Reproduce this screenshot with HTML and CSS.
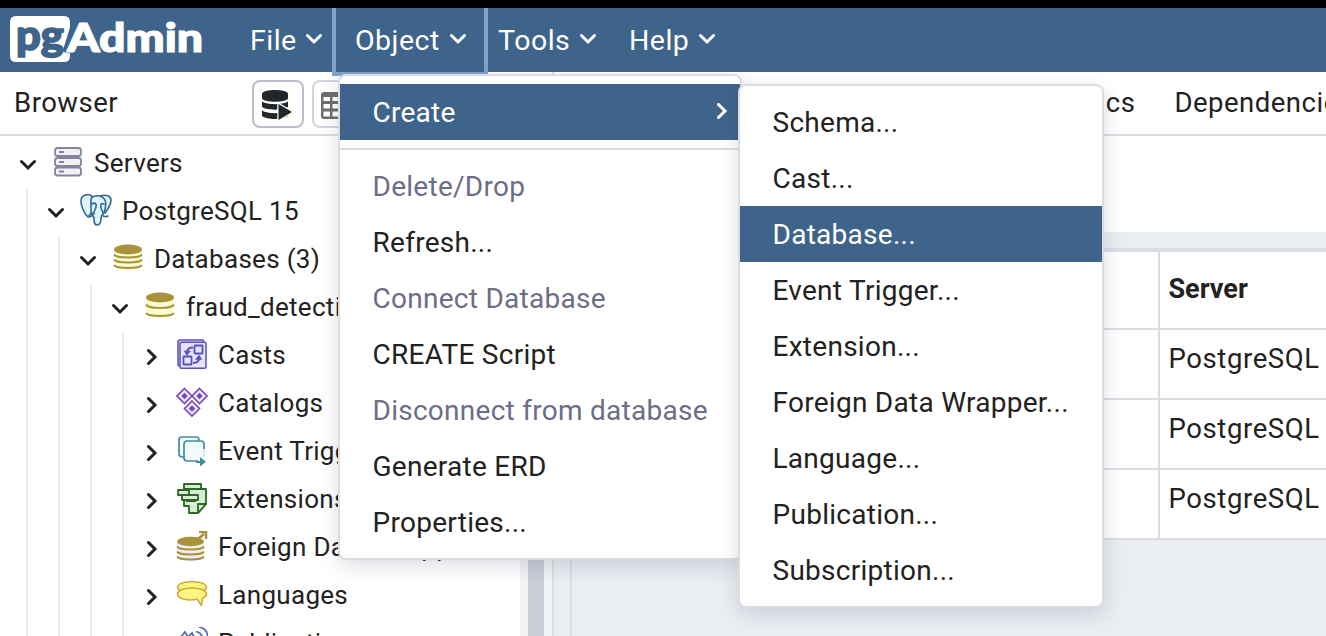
FILE: index.html
```html
<!DOCTYPE html>
<html lang="en">
<head>
<meta charset="utf-8">
<title>pgAdmin</title>
<link rel="stylesheet" href="styles.css">
</head>
<body>
<svg width="0" height="0" class="defs">
  <symbol id="down" viewBox="0 0 16 16"><path d="M1.5 4.500 8 11l6.500-6.500" fill="none" stroke="currentColor" stroke-width="3" stroke-linecap="round"/></symbol>
  <symbol id="right" viewBox="0 0 16 16"><path d="M4.500 1.500 11 8l-6.500 6.500" fill="none" stroke="currentColor" stroke-width="3" stroke-linecap="round"/></symbol>
</svg>
<div class="app">
  <div class="strip"></div>
  <header class="nav">
    <svg class="logo" width="196" height="64" viewBox="0 0 196 64">
      <path d="M6 8H54Q60 8 60 14V48Q60 54 54 54H6Q0 54 0 48V14Q0 8 6 8Z" fill="#fff"/>
      <path d="M61 16 53 42Q54 46 61 45Z" fill="#40648b"/>
      <text class="logo-pg" x="6" y="42" textLength="48" lengthAdjust="spacingAndGlyphs">pg</text>
      <text class="logo-admin" x="57" y="43.500" textLength="136" lengthAdjust="spacingAndGlyphs">Admin</text>
    </svg>
    <nav class="menubar">
      <div class="top file"><span>File</span><svg class="chev"><use href="#down"/></svg></div>
      <div class="top object"><span>Object</span><svg class="chev"><use href="#down"/></svg></div>
      <div class="top tools"><span>Tools</span><svg class="chev"><use href="#down"/></svg></div>
      <div class="top help"><span>Help</span><svg class="chev"><use href="#down"/></svg></div>
    </nav>
  </header>
  <main class="body">
    <aside class="browser">
      <div class="browser-head">
        <span class="browser-title">Browser</span>
        <div class="tool"><svg width="32" height="32" viewBox="0 0 32 32" fill="#222628"><path d="M1 5C1-.3 27-.3 27 5v4c0 5-26 5-26 0z"/><path d="M1 12.500c5 3.500 21 3.500 26 0V18c-5 3.500-21 3.500-26 0zM1 21.500c5 3.500 21 3.500 26 0V27c-5 4-21 4-26 0z"/><path d="M17.500 15v16L31 23z" stroke="#fff" stroke-width="2.500" paint-order="stroke"/></svg></div>
        <div class="tool dim"><svg width="32" height="32" viewBox="0 0 32 32"><path d="M5 3h24q3 0 3 3v21q0 3-3 3H5q-3 0-3-3V6q0-3 3-3zM4.500 8v4H11V8zm9 0v4H20V8zm-9 7v4.500H11V15zm9 0v4.500H20V15zm-9 7.500v5H11v-5zm9 0v5H20v-5z" fill="#222" fill-rule="evenodd"/></svg></div>
      </div>
      <ul class="tree">
        <li><div class="row"><svg class="chev"><use href="#down"/></svg><svg class="icon" viewBox="0 0 32 32"><g fill="#f1f1f4" stroke="#86839f" stroke-width="1.800"><rect x="3" y="1" width="26" height="8" rx="2.500"/><rect x="3" y="11" width="26" height="8" rx="2.500"/><rect x="3" y="20.500" width="26" height="8" rx="2.500"/><path d="M7 5h5M7 15h5M7 24.500h5"/></g></svg><span>Servers</span></div>
        <ul>
          <li><div class="row"><svg class="chev"><use href="#down"/></svg><svg class="icon elephant" viewBox="0 0 32 32"><g fill="#e1f3fb" stroke="#336791" stroke-width="1.600" stroke-linejoin="round" stroke-linecap="round"><path d="M12 2C7-.5 1 1 1 7c0 5 3 12 6 15 2 1 4-3 4-3l1-2z"/><path d="M20 2c6-2 11 0 11 4 0 5-3 9-6 13l-5-1z"/><path d="M11 5c2-4 11-5 14 1 2 4 0 7 0 10-1 5-3 3-4 8 0 5-1 7-4 7s-3-3-3-7c-1-4-4-3-3-8z"/><path d="M12 10c3-2 5 0 4 3-1 4-3 5-2 7M24 10c-3-1-4 0-3 3 0 3 2 4 2 6M13 19c-1 4-3 4-5 4M22 21c2 2 4 2 6 1" fill="none"/></g></svg><span>PostgreSQL 15</span></div>
          <ul>
            <li><div class="row"><svg class="chev"><use href="#down"/></svg><svg class="icon" viewBox="0 0 32 32"><path d="M2 7v16c0 5 28 5 28 0V7z" fill="#fbfbd0"/><g fill="none" stroke="#a8913d" stroke-width="1.900"><path d="M2 11.500c2 4 26 4 28 0M2 16.500c2 4 26 4 28 0M2 22c2 4 26 4 28 0"/></g><ellipse cx="16" cy="6.500" rx="14" ry="5" fill="#a8913d"/></svg><span>Databases (3)</span></div>
            <ul>
              <li><div class="row"><svg class="chev"><use href="#down"/></svg><svg class="icon" viewBox="0 0 32 32"><path d="M2 7v16c0 5 28 5 28 0V7z" fill="#fbfbd0"/><g fill="none" stroke="#a8913d" stroke-width="1.900"><path d="M2 13.500c2 4.500 26 4.500 28 0M2 22c2 4 26 4 28 0"/></g><ellipse cx="16" cy="6.500" rx="14" ry="5" fill="#a8913d"/></svg><span>fraud_detection</span></div>
              <ul>
                <li class="row"><svg class="chev"><use href="#right"/></svg><svg class="icon" viewBox="0 0 32 32"><g fill="#e6e3fa" stroke="#5b50b8" stroke-width="1.500"><path d="M4 27H3q-1 0-1-1V3q0-2 2-2h23l1 2"/><rect x="4" y="3.200" width="26" height="26" rx="1.500"/><rect x="18.500" y="6.500" width="8" height="8" rx=".5" stroke-width="1.800"/><rect x="7.500" y="17.500" width="8" height="8" rx=".5" stroke-width="1.800"/><path d="M17 8.500q-6 0-6 5M17 24q6 0 6-5" fill="none" stroke-width="1.800"/><path d="m9 12.500 2 3 2.500-3zM20.500 20l2.500-3 2 3z" fill="#5b50b8"/></g></svg><span>Casts</span></li>
                <li class="row"><svg class="chev"><use href="#right"/></svg><svg class="icon" viewBox="0 0 32 32"><g fill="#eee5fa" stroke="#7749b8" stroke-width="1.600"><path d="m8.500 1.500 7.500 7.500-7.500 7.500L1 9zM23.500 1.500 31 9l-7.500 7.500L16 9zM16 14l7.500 7.500L16 29l-7.500-7.500z"/></g><path d="m8.500 5.800 3.200 3.200-3.200 3.200L5.300 9zM23.500 5.800 26.700 9l-3.200 3.200L20.300 9zM16 18.300l3.200 3.200-3.200 3.200-3.200-3.200z" fill="#7749b8"/></svg><span>Catalogs</span></li>
                <li class="row"><svg class="chev"><use href="#right"/></svg><svg class="icon" viewBox="0 0 32 32"><g fill="#effdfd" stroke="#458b9d" stroke-width="1.700"><path d="M8 22H6q-3 0-3-3V5q0-3 3-3h14q3 0 3 3v2"/><path d="M22 26H11q-3 0-3-3V9q0-3 3-3h14q3 0 3 3v5"/><path d="M28 14v8" stroke="#c9e9e9"/></g><path d="M20 26h4v-4l6 4.800-6 4.800V28h-4z" fill="#458b9d"/></svg><span>Event Triggers</span></li>
                <li class="row"><svg class="chev"><use href="#right"/></svg><svg class="icon" viewBox="0 0 32 32"><g fill="#d5ecd5" stroke="#2e6625" stroke-width="1.800" stroke-linejoin="round"><path d="M8 1h17v7H8z"/><path d="M8 6h22v15l-8 9H13v-7H8z"/><path d="M2 7h11v5H2zM6 12h16v5H6zM10 18h10M30 21h-8v9z"/></g></svg><span>Extensions</span></li>
                <li class="row"><svg class="chev"><use href="#right"/></svg><svg class="icon" viewBox="0 0 32 32"><path d="M1 11v15c0 5 27 5 27 0V11z" fill="#eee"/><g fill="none" stroke="#a8913d" stroke-width="1.900"><path d="M1 15.500c2 4 25 4 27 0M1 20.500c2 4 25 4 27 0M1 25.500c2 4 25 4 27 0"/></g><ellipse cx="14.500" cy="10.500" rx="13.500" ry="4.700" fill="#a8913d"/><path d="m22 8 6-5M23 1h7v7" fill="none" stroke="#a8913d" stroke-width="2.500"/></svg><span>Foreign Data Wrappers</span></li>
                <li class="row"><svg class="chev"><use href="#right"/></svg><svg class="icon" viewBox="0 0 32 32"><g fill="#fdf582" stroke="#d1a437" stroke-width="1.500" stroke-linejoin="round"><ellipse cx="16" cy="8" rx="14.500" ry="5.500"/><path d="M21 20C11 22.500 1.500 19.500 1.500 15 1.500 7 30.500 7 30.500 15c0 2-2 3.500-4 4.500L25.500 26.500z"/></g></svg><span>Languages</span></li>
                <li class="row"><svg class="chev publication-chev"><use href="#right"/></svg><svg class="icon" viewBox="0 0 32 32"><g fill="none" stroke="#5268b5" stroke-width="1.700"><path d="m3 12 6-7 3 5 4-4 3 6M20 4.500q6 1 7 8M22-.5q10 2 10 12"/></g></svg><span>Publications</span></li>
              </ul></li>
            </ul></li>
          </ul></li>
        </ul></li>
      </ul>
    </aside>
    <div class="splitter"><div class="track"><div class="thumb"></div></div></div>
    <section class="content">
      <div class="tabs"><span>Statistics</span><span>Dependencies</span></div>
      <div class="panel"></div>
      <div class="grid-wrap">
        <div class="grid">
          <div class="cell head"></div><div class="cell head">Server</div>
          <div class="cell"></div><div class="cell">PostgreSQL 15</div>
          <div class="cell"></div><div class="cell">PostgreSQL 15</div>
          <div class="cell"></div><div class="cell">PostgreSQL 15</div>
        </div>
      </div>
    </section>
  </main>
  <div class="menu object-menu">
    <div class="item on"><span>Create</span><svg class="chev"><use href="#right"/></svg></div>
    <div class="divider"></div>
    <div class="item off">Delete/Drop</div>
    <div class="item">Refresh...</div>
    <div class="item off">Connect Database</div>
    <div class="item">CREATE Script</div>
    <div class="item off">Disconnect from database</div>
    <div class="item">Generate ERD</div>
    <div class="item">Properties...</div>
  </div>
  <div class="menu create-menu">
    <div class="item">Schema...</div>
    <div class="item">Cast...</div>
    <div class="item on">Database...</div>
    <div class="item">Event Trigger...</div>
    <div class="item">Extension...</div>
    <div class="item">Foreign Data Wrapper...</div>
    <div class="item">Language...</div>
    <div class="item">Publication...</div>
    <div class="item">Subscription...</div>
  </div>
</div>
</body>
</html>
```
FILE: styles.css
```css
* { box-sizing: border-box; }
body { margin: 0; font-family: Roboto, sans-serif; font-size: 27.5px; color: #222; overflow: hidden; }
.defs { position: absolute; }
.app { position: relative; width: 1326px; height: 636px; overflow: hidden; display: flex; flex-direction: column; background: #fff; }
.strip { height: 8px; flex: none; background: #000; }
.nav { height: 64px; flex: none; display: flex; background: #3f648b; color: #fff; padding-left: 10px; z-index: 1; }
.logo { flex: none; overflow: visible; }
.logo-pg, .logo-admin { font-family: Lato, sans-serif; font-weight: 900; }
.logo-pg { font-size: 42px; fill: #3f648b; stroke: #3f648b; stroke-width: 1.6px; }
.logo-admin { font-size: 39px; fill: #fff; stroke: #fff; stroke-width: 1.2px; }
.menubar { display: flex; align-items: flex-start; font-size: 28.5px; letter-spacing: .5px; }
.top { height: 64px; display: flex; align-items: center; justify-content: space-between; white-space: nowrap; }
.chev { width: 16px; height: 16px; flex: none; }
.top .chev { margin-bottom: 3px; }
.file { width: 72px; margin-left: 44px; }
.object { width: 156px; height: 68px; margin-left: 10px; padding: 0 18px 0 19px; border: 4px solid #7fa4ca; border-top: 0; }
.tools { width: 98px; margin-left: 10px; }
.help { width: 86px; margin-left: 33px; }
.body { flex: 1; min-height: 0; display: flex; }
.browser { width: 520px; flex: none; overflow: hidden; }
.browser-head { height: 64px; border-bottom: 2px solid #dcdde3; display: flex; align-items: center; padding: 2px 0 0 14px; gap: 8px; }
.browser-title { width: 230px; letter-spacing: .5px; margin-top: -4px; }
.tool { width: 52px; height: 48px; border: 2px solid #b9bccd; border-radius: 8px; display: flex; align-items: center; justify-content: center; }
.tool svg { margin: 2px 2px 0 0; }
.dim { opacity: .65; }
.dim svg { margin: 2px 6px 0 0; }
ul { list-style: none; margin: 0; padding: 0; }
.tree { padding-top: 4px; font-size: 26px; letter-spacing: .3px; }
.tree ul { border-left: 2px solid #eaecf2; margin-left: 30px; }
.tree > li > ul { margin-left: 26px; }
.row { height: 48px; display: flex; align-items: center; padding-left: 20px; white-space: nowrap; }
.row .icon { width: 32px; height: 32px; margin: -2px 10px 0 16px; flex: none; }
.row .elephant { margin-top: -4px; }
.row .chev { margin-top: 1px; }
.publication-chev { visibility: hidden; }
.row span { margin-top: -2px; }
.splitter { width: 32px; flex: none; padding-top: 64px; display: flex; }
.track { flex: 1; background: #f1f2f4; padding: 0 8px; display: flex; }
.thumb { flex: 1; background: #c9cdd8; }
.content { flex: 1; min-width: 0; border-left: 2px solid #dcdde3; background: #eaedf2; }
.tabs { height: 64px; background: #fff; border-bottom: 2px solid #dcdde3; padding: 0 0 2px 462px; display: flex; align-items: center; gap: 39px; letter-spacing: .5px; white-space: nowrap; overflow: hidden; }
.panel { height: 96px; background: #fff; }
.grid-wrap { margin-left: 16px; height: 404px; border-left: 2px solid #dcdde3; padding-top: 16px; }
.grid { border-top: 4px solid #dcdde3; display: grid; grid-template-columns: 588px 1fr; grid-template-rows: 78px 70px 70px 70px; }
.cell { background: #fff; border-right: 2px solid #dcdde3; border-bottom: 2px solid #dcdde3; padding: 13px 0 0 8.5px; line-height: 32px; white-space: nowrap; overflow: hidden; letter-spacing: .6px; }
.cell:nth-child(even) { border-right: 0; }
.head { font-size: 27px; font-weight: 700; padding-top: 21px; letter-spacing: 0; }
.menu { position: absolute; background: #fff; border: 2px solid #dcdde3; border-radius: 8px; padding: 8px 0; font-size: 28px; letter-spacing: .27px; box-shadow: 0 6px 20px rgba(40, 50, 80, .16); z-index: 2; }
.object-menu { left: 338px; top: 74px; width: 404px; }
.create-menu { left: 738px; top: 84px; width: 366px; z-index: 3; }
.item { height: 56px; padding: 0 10px 0 32.5px; display: flex; align-items: center; justify-content: space-between; white-space: nowrap; }
.on { background: #3f648b; color: #fff; }
.on .chev { margin-bottom: 2px; }
.off { color: #6b6e85; }
.divider { height: 2px; background: #dcdde3; margin: 8px 0; }
```
